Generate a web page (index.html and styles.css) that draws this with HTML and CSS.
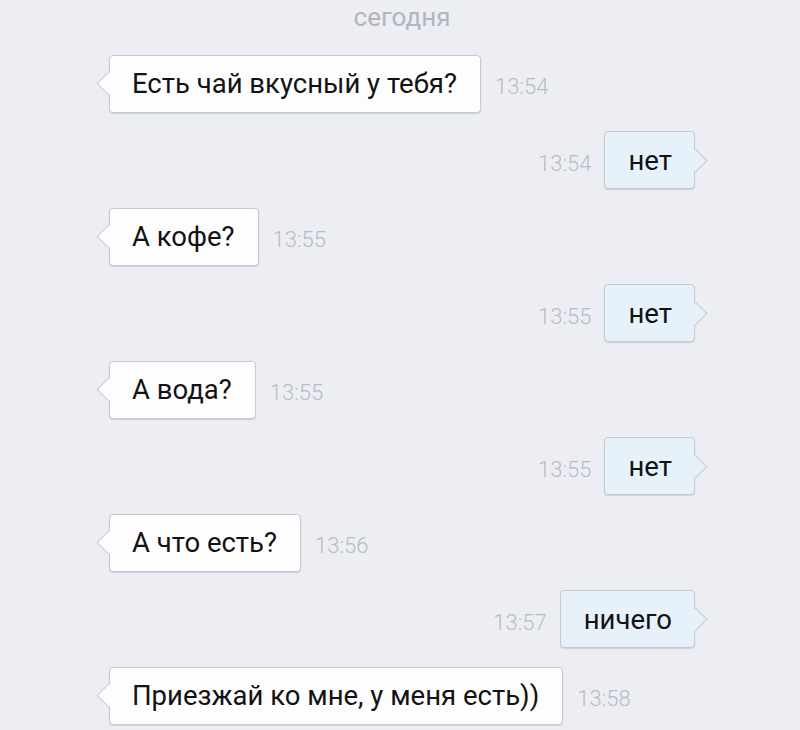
FILE: index.html
```html
<!DOCTYPE html>
<html lang="ru">
<head>
<meta charset="utf-8">
<link rel="stylesheet" href="styles.css">
</head>
<body>
<div class="chat">
  <div class="day">сегодня</div>
  <div class="row in"><div class="bubble">Есть чай вкусный у тебя?</div><span class="time">13:54</span></div>
  <div class="row out"><span class="time">13:54</span><div class="bubble">нет</div></div>
  <div class="row in"><div class="bubble">А кофе?</div><span class="time">13:55</span></div>
  <div class="row out"><span class="time">13:55</span><div class="bubble">нет</div></div>
  <div class="row in"><div class="bubble">А вода?</div><span class="time">13:55</span></div>
  <div class="row out"><span class="time">13:55</span><div class="bubble">нет</div></div>
  <div class="row in"><div class="bubble">А что есть?</div><span class="time">13:56</span></div>
  <div class="row out"><span class="time">13:57</span><div class="bubble">ничего</div></div>
  <div class="row in"><div class="bubble">Приезжай ко мне, у меня есть))</div><span class="time">13:58</span></div>
</div>
</body>
</html>
```
FILE: styles.css
```css
html, body {
  margin: 0;
  padding: 0;
}
body {
  background: #edeef4;
  width: 800px;
  height: 730px;
  overflow: hidden;
  font-family: Roboto, "Noto Sans", sans-serif;
}
.chat {
  display: flex;
  flex-direction: column;
  gap: 18.5px;
}
.day {
  text-align: center;
  font-size: 26px;
  color: #b0b5bf;
  height: 36px;
  line-height: 34px;
  padding-left: 4px;
}
.row {
  display: flex;
  align-items: center;
  height: 58px;
}
.row.in {
  padding-left: 109px;
  gap: 14px;
}
.row.out {
  justify-content: flex-end;
  padding-right: 105px;
  gap: 13px;
}
.bubble {
  position: relative;
  box-sizing: border-box;
  height: 58px;
  display: flex;
  align-items: center;
  padding: 0 23px 0 22px;
  font-size: 27.5px;
  color: #121214;
  background: #fdfdfd;
  border: 1.5px solid #c5cad2;
  border-radius: 4px;
  box-shadow: 0 1px 1px rgba(150, 155, 165, 0.35);
}
.out .bubble {
  background: #e7f1fa;
  padding: 0 22px 0 23px;
}
.bubble::before {
  content: "";
  position: absolute;
  top: 50%;
  width: 17px;
  height: 17px;
  background: inherit;
  border: 1.5px solid #c5cad2;
  box-sizing: border-box;
}
.in .bubble::before {
  left: -10px;
  margin-top: -8.5px;
  border-right: none;
  border-top: none;
  transform: rotate(45deg);
}
.out .bubble::before {
  right: -10px;
  margin-top: -8.5px;
  border-left: none;
  border-bottom: none;
  transform: rotate(45deg);
}
.time {
  font-size: 22px;
  font-weight: 300;
  color: #b6bbc5;
  padding-top: 6px;
}
```
